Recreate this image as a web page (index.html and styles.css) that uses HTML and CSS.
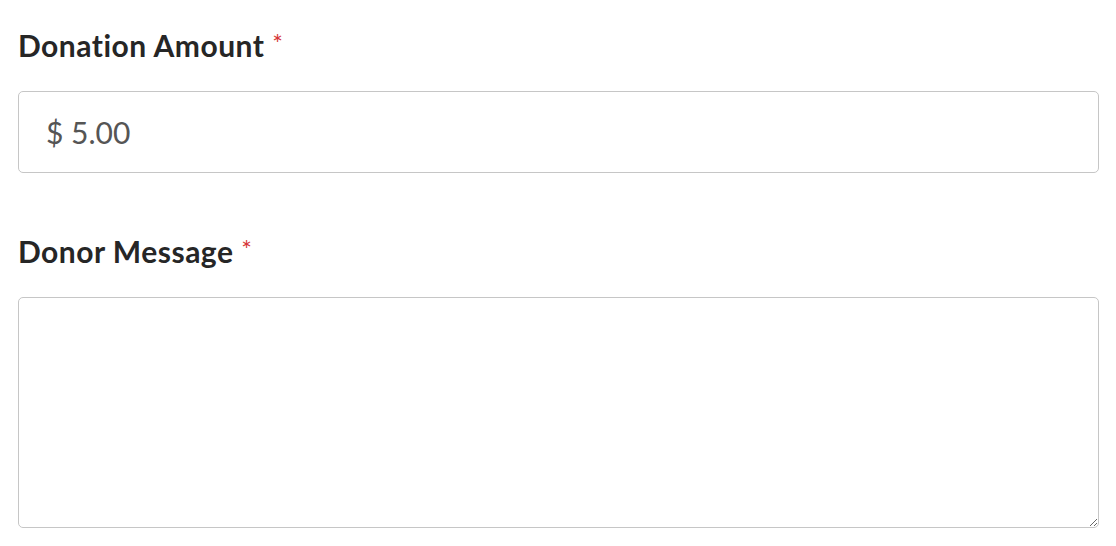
FILE: index.html
```html
<!DOCTYPE html>
<html>
<head>
<meta charset="utf-8">
<link rel="stylesheet" href="styles.css">
</head>
<body>
<form class="form">
  <div class="field">
    <label class="label" for="amt">Donation Amount <span class="req">*</span></label>
    <input class="input" id="amt" type="text" value="$ 5.00">
  </div>
  <div class="field">
    <label class="label" for="msg">Donor Message <span class="req">*</span></label>
    <textarea class="textarea" id="msg"></textarea>
  </div>
</form>
</body>
</html>
```
FILE: styles.css
```css
html, body {
  margin: 0;
  background: #fff;
}
.form {
  display: flex;
  flex-direction: column;
  gap: 60px;
  padding: 27px 17px 0 18px;
  font-family: Lato, "Liberation Sans", sans-serif;
}
.field {
  display: flex;
  flex-direction: column;
  gap: 28px;
}
.label {
  font-size: 30px;
  line-height: 36px;
  height: 36px;
  font-weight: 700;
  letter-spacing: 0.5px;
  color: #262626;
}
.req {
  color: #d63637;
  font-weight: 400;
  font-size: 25px;
  line-height: 0;
  vertical-align: 4px;
  letter-spacing: 0;
}
.input, .textarea {
  box-sizing: border-box;
  width: 100%;
  margin: 0;
  border: 1.5px solid #c6c6c6;
  border-radius: 5px;
  background: #fff;
  font-family: Lato, "Liberation Sans", sans-serif;
  color: #555;
  outline: none;
}
.input {
  height: 82px;
  padding: 0 27px;
  font-size: 30px;
}
.textarea {
  height: 231px;
  resize: vertical;
  padding: 20px 27px;
  font-size: 30px;
}
```
